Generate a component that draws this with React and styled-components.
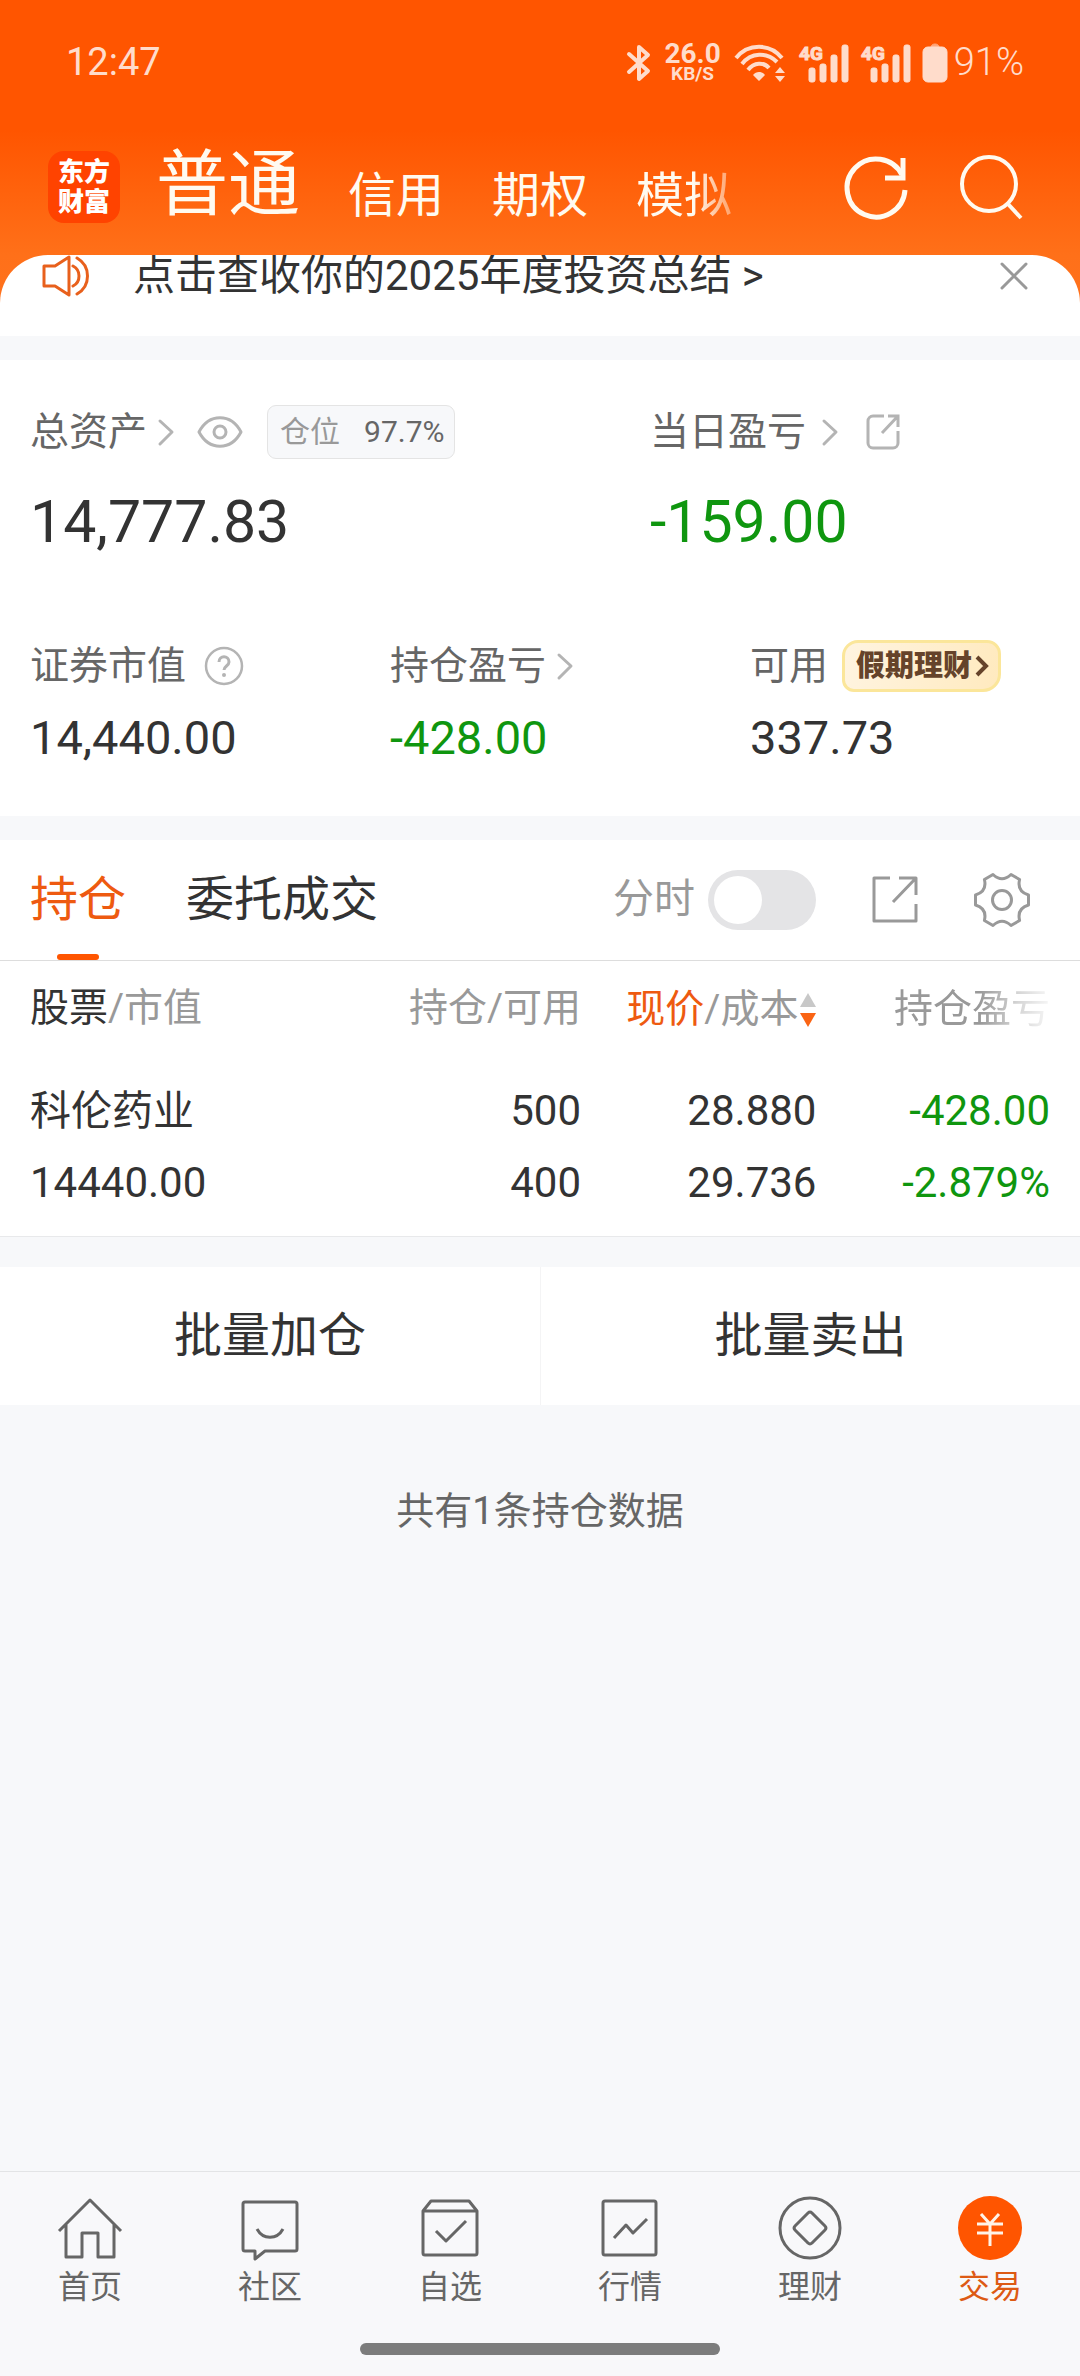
import { useState } from 'react';
import styled, { createGlobalStyle } from 'styled-components';

const GlobalStyle = createGlobalStyle`
  :root {
    --color-brand: #ff5500;
    --color-brand-text: #ee5a10;
    --color-green: #0f960f;
    --color-grey-900: #333333;
    --color-grey-600: #666666;
    --color-grey-400: #999999;
    --color-grey-300: #b4b4b4;
    --color-line: #dddddd;
    --color-page: #f7f8fa;
  }

  * {
    box-sizing: border-box;
    margin: 0;
    padding: 0;
  }

  body {
    background: var(--color-page);
    color: var(--color-grey-900);
    font-family: Roboto, 'Noto Sans CJK SC', sans-serif;
    font-size: 39px;
    line-height: 1.2;
  }

  button {
    border: none;
    background: none;
    color: inherit;
    font: inherit;
    cursor: pointer;
  }

  a {
    color: inherit;
    text-decoration: none;
  }

  svg {
    display: block;
    flex-shrink: 0;
    overflow: visible;
    fill: none;
    stroke: currentColor;
  }
`;

const Page = styled.div`
  min-height: 100vh;
  display: flex;
  flex-direction: column;
`;

/* ---------- header ---------- */

const Header = styled.header`
  background: linear-gradient(#ff5500 130px, #ff7019 255px, #ff7320);
`;

const StatusBar = styled.div`
  height: 126px;
  padding: 0 56px 0 66px;
  display: flex;
  align-items: center;
  justify-content: space-between;
  color: #ffdccb;
  font-size: 38px;
`;

const StatusIcons = styled.div`
  display: flex;
  align-items: center;
  gap: 13px;
`;

const Speed = styled.div`
  display: flex;
  flex-direction: column;
  align-items: center;
  font-size: 28px;
  line-height: 22px;
  font-weight: 700;

  & small {
    font-size: 19px;
    line-height: 18px;
  }
`;

const Battery = styled.div`
  display: flex;
  align-items: center;
  gap: 7px;
  font-weight: 300;
`;

const TitleBar = styled.div`
  padding: 16px 56px 23px 48px;
  display: flex;
  align-items: center;
  color: #fffaf0;
`;

const Logo = styled.div`
  width: 72px;
  height: 72px;
  border-radius: 16px;
  background: #ff4300;
  display: grid;
  place-content: center;
  text-align: center;
  color: #fff;
  font-size: 26px;
  line-height: 30px;
  font-weight: 900;
`;

const AccountTabs = styled.nav`
  flex: 1;
  height: 90px;
  margin-left: 36px;
  display: flex;
  align-items: flex-end;
  gap: 48px;
`;

const AccountTab = styled.button`
  font-size: ${(props) => (props.$active ? '72px' : '48px')};
  line-height: ${(props) => (props.$active ? '86px' : '72px')};
  align-self: ${(props) => (props.$active ? 'flex-start' : 'flex-end')};
  white-space: nowrap;
  mask-image: ${(props) =>
    props.$faded
      ? 'linear-gradient(to right, #000 60%, rgba(0, 0, 0, 0.4))'
      : 'none'};
`;

const TitleActions = styled.div`
  display: flex;
  align-items: center;
  gap: 48px;
`;

const Notice = styled.div`
  height: 81px;
  padding: 0 52px 0 42px;
  border-radius: 48px 48px 0 0;
  background: #fff;
  overflow: hidden;
  display: flex;
  align-items: flex-start;

  & > svg {
    color: #e8601c;
  }

  & a {
    flex: 1;
    margin-left: 43px;
    font-size: 42px;
    line-height: 42px;
  }

  & button {
    padding-top: 7px;
    color: var(--color-grey-400);
  }
`;

/* ---------- assets ---------- */

const Panel = styled.section`
  background: #fff;
  margin-top: 24px;
`;

const Summary = styled(Panel)`
  padding: 42px 0 36px;
`;

const TotalGrid = styled.div`
  display: grid;
  grid-template-columns: 31fr 23fr;
`;

const DetailGrid = styled.div`
  margin-top: 54px;
  display: grid;
  grid-template-columns: repeat(3, 1fr);
`;

const Stat = styled.div`
  padding-left: 30px;
`;

const StatLabel = styled.div`
  height: 60px;
  display: flex;
  align-items: center;
  color: var(--color-grey-600);
  white-space: nowrap;

  & svg {
    color: var(--color-grey-300);
  }
`;

const LabelButton = styled.button`
  display: flex;
  align-items: center;
  gap: ${(props) => props.$gap || 10}px;
`;

const IconButton = styled.button`
  margin-left: ${(props) => props.$space || 0}px;
`;

const StatValue = styled.p`
  font-size: ${(props) => (props.$large ? '59px' : '47px')};
  line-height: ${(props) => (props.$large ? '120px' : '84px')};
  color: ${(props) =>
    props.$loss ? 'var(--color-green)' : 'var(--color-grey-900)'};
`;

const Ratio = styled.span`
  height: 54px;
  margin-left: 24px;
  padding: 0 10px 0 12px;
  display: flex;
  align-items: center;
  gap: 24px;
  border: 1px solid #e4e4e4;
  border-radius: 9px;
  background: var(--color-page);
  font-size: 30px;

  & span {
    color: var(--color-grey-400);
  }
`;

const Promo = styled.a`
  height: 52px;
  margin-left: 14px;
  padding: 0 9px 0 11px;
  display: flex;
  align-items: center;
  gap: 3px;
  border: 3px solid #fbe69a;
  border-radius: 16px 14px 18px 12px;
  background: linear-gradient(100deg, #fff4e0, #ffeabf);
  color: #65432a;
  font-size: 29px;
  font-weight: 900;

  && svg {
    color: #65432a;
  }
`;

/* ---------- positions ---------- */

const TabBar = styled.div`
  height: 121px;
  padding: 0 50px 0 30px;
  border-bottom: 1px solid var(--color-line);
  display: flex;
  justify-content: space-between;
`;

const Tabs = styled.div`
  display: flex;
  gap: 60px;
`;

const Tab = styled.button`
  position: relative;
  font-size: 48px;
  color: ${(props) =>
    props.$active ? 'var(--color-brand-text)' : 'var(--color-grey-900)'};

  &::after {
    content: '';
    display: ${(props) => (props.$active ? 'block' : 'none')};
    position: absolute;
    bottom: 0;
    left: calc(50% - 21px);
    width: 42px;
    height: 6px;
    border-radius: 3px;
    background: var(--color-brand);
  }
`;

const Tools = styled.div`
  display: flex;
  align-items: center;
  gap: 56px;
  color: var(--color-grey-400);
`;

const ToggleLabel = styled.label`
  display: flex;
  align-items: center;
  gap: 13px;
  font-size: 41px;
`;

const Toggle = styled.input`
  appearance: none;
  width: 108px;
  height: 60px;
  padding: 6px;
  border-radius: 30px;
  background: ${(props) => (props.checked ? 'var(--color-brand)' : '#e4e4e6')};
  display: flex;
  justify-content: ${(props) => (props.checked ? 'flex-end' : 'flex-start')};

  &::before {
    content: '';
    width: 48px;
    height: 48px;
    border-radius: 50%;
    background: #fff;
  }
`;

const Table = styled.table`
  width: 100%;
  table-layout: fixed;
  border-collapse: collapse;
  border-bottom: 1px solid #e8e9eb;
`;

const Th = styled.th`
  width: ${(props) => props.$width};
  height: 95px;
  text-align: right;
  font-weight: 400;
  color: var(--color-grey-400);
  white-space: nowrap;

  &:first-child {
    padding-left: 30px;
    text-align: left;
  }

  &:last-child {
    padding-right: 30px;
  }
`;

const Strong = styled.span`
  color: ${(props) =>
    props.$sorted ? 'var(--color-brand-text)' : 'var(--color-grey-900)'};
`;

const SortButton = styled.button`
  display: inline-flex;
  align-items: center;
  gap: 2px;
  vertical-align: middle;
`;

const Faded = styled.span`
  display: inline-block;
  vertical-align: middle;
  mask-image: linear-gradient(
    to right,
    #000 55%,
    rgba(0, 0, 0, 0.4) 80%,
    rgba(0, 0, 0, 0.08)
  );
`;

const Td = styled.td`
  padding: 19px 0 17px;
  text-align: right;
  font-size: 42px;
  line-height: 72px;
  color: ${(props) =>
    props.$loss ? 'var(--color-green)' : 'var(--color-grey-900)'};

  &:first-child {
    padding-left: 30px;
    text-align: left;
  }

  &:last-child {
    padding-right: 30px;
  }
`;

const StockName = styled.p`
  font-size: 41px;
`;

const BatchActions = styled.div`
  margin-top: 30px;
  display: grid;
  grid-template-columns: 1fr 1fr;
  background: #fff;

  & button {
    height: 138px;
    font-size: 48px;
  }

  & button + button {
    border-left: 1px solid #f4f4f5;
  }
`;

const Footnote = styled.p`
  margin-top: 76px;
  text-align: center;
  font-size: 38px;
  line-height: 60px;
  color: var(--color-grey-600);
`;

/* ---------- bottom bar ---------- */

const BottomBar = styled.footer`
  margin-top: auto;
  border-top: 1px solid #e3e4e6;
  background: #f8f8fa;
`;

const BottomNav = styled.nav`
  padding-top: 24px;
  display: grid;
  grid-template-columns: repeat(6, 1fr);
`;

const BottomLink = styled.a`
  display: flex;
  flex-direction: column;
  align-items: center;
  gap: 7px;
  font-size: 32px;
  line-height: 40px;
  color: ${(props) => (props.$active ? '#dd5a14' : 'var(--color-grey-600)')};
`;

const HomeIndicator = styled.div`
  width: 33.33%;
  height: 12px;
  margin: 36px auto 21px;
  border-radius: 6px;
  background: #7c7c7c;
`;

/* ---------- icons ---------- */

const Bluetooth = () => (
  <svg width="24" height="38" viewBox="0 0 24 38" strokeWidth="4" strokeLinejoin="round" strokeLinecap="round">
    <path d="M2 10l19 17-9 8V3l9 8L2 28" />
  </svg>
);

const Wifi = () => (
  <svg width="52" height="38" viewBox="0 0 52 38" strokeWidth="4">
    <path d="M2 14C14-1 36-1 48 14M8 20C17 8 33 8 43 18M14 26c6-8 16-8 21-2" />
    <path d="M19 31c3-4 9-4 12 0l-6 6zM41 29l5-6 5 6zM41 32l5 6 5-6z" fill="currentColor" stroke="none" />
  </svg>
);

const Signal = () => (
  <svg width="49" height="38" viewBox="0 0 49 38" stroke="none">
    <rect x="10" y="24" width="6" height="14" rx="2" fill="currentColor" />
    <rect x="21" y="20" width="6" height="18" rx="2" fill="currentColor" />
    <rect x="32" y="11" width="6" height="27" rx="2" fill="currentColor" />
    <rect x="43" y="1" width="6" height="37" rx="2" fill="currentColor" />
    <text x="0" y="16" fill="currentColor" fontFamily="Roboto, sans-serif" fontSize="19" fontWeight="700">
      4G
    </text>
  </svg>
);

const BatteryIcon = () => (
  <svg width="24" height="38" viewBox="0 0 24 38" stroke="none">
    <path d="M8 3c0-4 8-4 8 0z" fill="currentColor" opacity="0.6" />
    <rect y="3" width="24" height="35" rx="5" fill="currentColor" />
  </svg>
);

const Refresh = () => (
  <svg width="66" height="66" viewBox="0 0 66 66" strokeWidth="5">
    <path d="M61 36A29 29 0 1 1 58 21" />
    <path d="M59 4v20H41" />
  </svg>
);

const Search = () => (
  <svg width="66" height="66" viewBox="0 0 66 66" strokeWidth="4" stroke="#ffe6d3">
    <circle cx="31" cy="30" r="27" />
    <path d="M50 50l13 14" />
  </svg>
);

const Speaker = () => (
  <svg width="48" height="42" viewBox="0 0 48 42" strokeWidth="3" strokeLinejoin="round" strokeLinecap="round">
    <path d="M2 11h11L27 2v38l-14-9H2zM31 11c8 4 8 16 0 20M35 3c14 8 14 28 0 36" />
  </svg>
);

const Close = () => (
  <svg width="28" height="28" viewBox="0 0 28 28" strokeWidth="3" strokeLinecap="round">
    <path d="M2 2l24 24M26 2L2 26" />
  </svg>
);

const Chevron = () => (
  <svg width="18" height="28" viewBox="0 0 18 28" strokeWidth="3" strokeLinecap="round" strokeLinejoin="round">
    <path d="M3 3l12 11L3 26" />
  </svg>
);

const ChevronBold = () => (
  <svg width="14" height="24" viewBox="0 0 14 24" strokeWidth="4">
    <path d="M2 3l9 9-9 9" />
  </svg>
);

const Eye = () => (
  <svg width="46" height="32" viewBox="0 0 46 32" strokeWidth="3" strokeLinejoin="round">
    <path d="M2 16C12-3 34-3 44 16 34 35 12 35 2 16z" />
    <circle cx="23" cy="16" r="6" />
  </svg>
);

const Help = () => (
  <svg width="40" height="40" viewBox="0 0 40 40" strokeWidth="2.5">
    <circle cx="20" cy="20" r="18" />
    <path d="M15 16c0-7 10-7 10 0 0 4-5 4-5 8" strokeWidth="3" />
    <circle cx="20" cy="29" r="2" fill="currentColor" stroke="none" />
  </svg>
);

const Share = () => (
  <svg width="34" height="36" viewBox="0 0 34 36" strokeWidth="3">
    <path d="M18 2H7a5 5 0 0 0-5 5v22a5 5 0 0 0 5 5h20a5 5 0 0 0 5-5V17M22 2h10v11M32 2L16 19" />
  </svg>
);

const ShareLarge = () => (
  <svg width="46" height="48" viewBox="0 0 46 48" strokeWidth="3" strokeLinejoin="round">
    <path d="M18 2H2v43h42V28M27 2h17v17M44 2L21 26" />
  </svg>
);

const Gear = () => (
  <svg width="56" height="56" viewBox="-28 -28 56 56" strokeWidth="3" strokeLinejoin="round">
    <path d="M-9-25.500Q0-17 9-25.500L17.600-20.500Q14.700-8.500 26.500-5V5Q14.700 8.500 17.600 20.500L9 25.500Q0 17-9 25.500L-17.600 20.500Q-14.700 8.500-26.500 5V-5Q-14.700-8.500-17.600-20.500Z" />
    <circle r="9.500" />
  </svg>
);

const SortArrows = () => (
  <svg width="16" height="36" viewBox="0 0 16 36" stroke="none">
    <path d="M0 15L8 1l8 14z" fill="#c8c8c8" stroke="none" />
    <path d="M0 21h16L8 35z" fill="#fa6414" stroke="none" />
  </svg>
);

const navIcons = {
  home: <path d="M1 35L32 4l31 31M8 28v33h16V37h16v24h16V28" />,
  community: (
    <path d="M7 6h50a2 2 0 0 1 2 2v45a2 2 0 0 1-2 2H27l-10 8v-8H7a2 2 0 0 1-2-2V8a2 2 0 0 1 2-2zM19 33c6 11 20 11 26 0" />
  ),
  watchlist: <path d="M5 15l8-10h38l8 10v42a2 2 0 0 1-2 2H7a2 2 0 0 1-2-2zh54M18 35l10 10 20-20" />,
  market: <path d="M7 5h49a2 2 0 0 1 2 2v50a2 2 0 0 1-2 2H7a2 2 0 0 1-2-2V7a2 2 0 0 1 2-2zM16 42l12-13 7 8 14-14" />,
  wealth: (
    <>
      <circle cx="32" cy="32" r="30" />
      <path d="M30 17q2-2 4 0l13 13q2 2 0 4L34 47q-2 2-4 0L17 34q-2-2 0-4z" />
    </>
  ),
  trade: (
    <>
      <circle cx="32" cy="32" r="32" fill="#ff5500" stroke="none" />
      <path d="M23 18l9 10 9-10M19 28h26M19 37h26M32 28v22" stroke="#fff3e8" strokeWidth="3" />
    </>
  ),
};

const navItems = [
  { id: 'home', label: '首页' },
  { id: 'community', label: '社区' },
  { id: 'watchlist', label: '自选' },
  { id: 'market', label: '行情' },
  { id: 'wealth', label: '理财' },
  { id: 'trade', label: '交易' },
];

const accounts = ['普通', '信用', '期权', '模拟'];

const positions = [
  {
    name: '科伦药业',
    value: '14440.00',
    amount: 500,
    available: 400,
    price: '28.880',
    cost: '29.736',
    profit: '-428.00',
    rate: '-2.879%',
  },
];

function AppHeader() {
  const [account, setAccount] = useState('普通');

  return (
    <Header>
      <StatusBar>
        <span>12:47</span>
        <StatusIcons>
          <Bluetooth />
          <Speed>
            26.0<small>KB/S</small>
          </Speed>
          <Wifi />
          <Signal />
          <Signal />
          <Battery>
            <BatteryIcon />
            91%
          </Battery>
        </StatusIcons>
      </StatusBar>
      <TitleBar>
        <Logo>
          <span>东方</span>
          <span>财富</span>
        </Logo>
        <AccountTabs>
          {accounts.map((name, i) => (
            <AccountTab
              key={name}
              $active={name === account}
              $faded={i === accounts.length - 1}
              onClick={() => setAccount(name)}
            >
              {name}
            </AccountTab>
          ))}
        </AccountTabs>
        <TitleActions>
          <IconButton aria-label="刷新">
            <Refresh />
          </IconButton>
          <IconButton aria-label="搜索">
            <Search />
          </IconButton>
        </TitleActions>
      </TitleBar>
      <Notice>
        <Speaker />
        <a href="#summary">点击查收你的2025年度投资总结 &gt;</a>
        <button aria-label="关闭">
          <Close />
        </button>
      </Notice>
    </Header>
  );
}

function AssetSummary() {
  return (
    <Summary id="summary">
      <TotalGrid>
        <Stat>
          <StatLabel>
            <LabelButton>
              总资产
              <Chevron />
            </LabelButton>
            <IconButton $space={22} aria-label="隐藏金额">
              <Eye />
            </IconButton>
            <Ratio>
              <span>仓位</span>97.7%
            </Ratio>
          </StatLabel>
          <StatValue $large>14,777.83</StatValue>
        </Stat>
        <Stat>
          <StatLabel>
            <LabelButton $gap={15}>
              当日盈亏
              <Chevron />
            </LabelButton>
            <IconButton $space={27} aria-label="分享">
              <Share />
            </IconButton>
          </StatLabel>
          <StatValue $large $loss>
            -159.00
          </StatValue>
        </Stat>
      </TotalGrid>
      <DetailGrid>
        <Stat>
          <StatLabel>
            证券市值
            <IconButton $space={18} aria-label="说明">
              <Help />
            </IconButton>
          </StatLabel>
          <StatValue>14,440.00</StatValue>
        </Stat>
        <Stat>
          <StatLabel>
            <LabelButton>
              持仓盈亏
              <Chevron />
            </LabelButton>
          </StatLabel>
          <StatValue $loss>-428.00</StatValue>
        </Stat>
        <Stat>
          <StatLabel>
            可用
            <Promo href="#wealth">
              假期理财
              <ChevronBold />
            </Promo>
          </StatLabel>
          <StatValue>337.73</StatValue>
        </Stat>
      </DetailGrid>
    </Summary>
  );
}

function Positions() {
  const [tab, setTab] = useState('持仓');
  const [timeline, setTimeline] = useState(false);

  return (
    <Panel>
      <TabBar>
        <Tabs>
          {['持仓', '委托成交'].map((name) => (
            <Tab key={name} $active={name === tab} onClick={() => setTab(name)}>
              {name}
            </Tab>
          ))}
        </Tabs>
        <Tools>
          <ToggleLabel>
            分时
            <Toggle
              type="checkbox"
              role="switch"
              checked={timeline}
              onChange={(e) => setTimeline(e.target.checked)}
            />
          </ToggleLabel>
          <IconButton aria-label="分享持仓">
            <ShareLarge />
          </IconButton>
          <IconButton aria-label="设置">
            <Gear />
          </IconButton>
        </Tools>
      </TabBar>
      <Table>
        <thead>
          <tr>
            <Th $width="33%">
              <Strong>股票</Strong>/市值
            </Th>
            <Th $width="20.8%">持仓/可用</Th>
            <Th $width="21.8%">
              <SortButton>
                <span>
                  <Strong $sorted>现价</Strong>/成本
                </span>
                <SortArrows />
              </SortButton>
            </Th>
            <Th>
              <Faded>持仓盈亏</Faded>
            </Th>
          </tr>
        </thead>
        <tbody>
          {positions.map((item) => (
            <tr key={item.name}>
              <Td>
                <StockName>{item.name}</StockName>
                <p>{item.value}</p>
              </Td>
              <Td>
                <p>{item.amount}</p>
                <p>{item.available}</p>
              </Td>
              <Td>
                <p>{item.price}</p>
                <p>{item.cost}</p>
              </Td>
              <Td $loss>
                <p>{item.profit}</p>
                <p>{item.rate}</p>
              </Td>
            </tr>
          ))}
        </tbody>
      </Table>
    </Panel>
  );
}

function App() {
  return (
    <>
      <GlobalStyle />
      <Page>
        <AppHeader />
        <main>
          <AssetSummary />
          <Positions />
          <BatchActions>
            <button>批量加仓</button>
            <button>批量卖出</button>
          </BatchActions>
          <Footnote>共有{positions.length}条持仓数据</Footnote>
        </main>
        <BottomBar>
          <BottomNav>
            {navItems.map(({ id, label }) => (
              <BottomLink key={id} href={`#${id}`} $active={id === 'trade'}>
                <svg width="64" height="64" viewBox="0 0 64 64" strokeWidth="3" strokeLinejoin="round">
                  {navIcons[id]}
                </svg>
                {label}
              </BottomLink>
            ))}
          </BottomNav>
          <HomeIndicator />
        </BottomBar>
      </Page>
    </>
  );
}

export default App;
